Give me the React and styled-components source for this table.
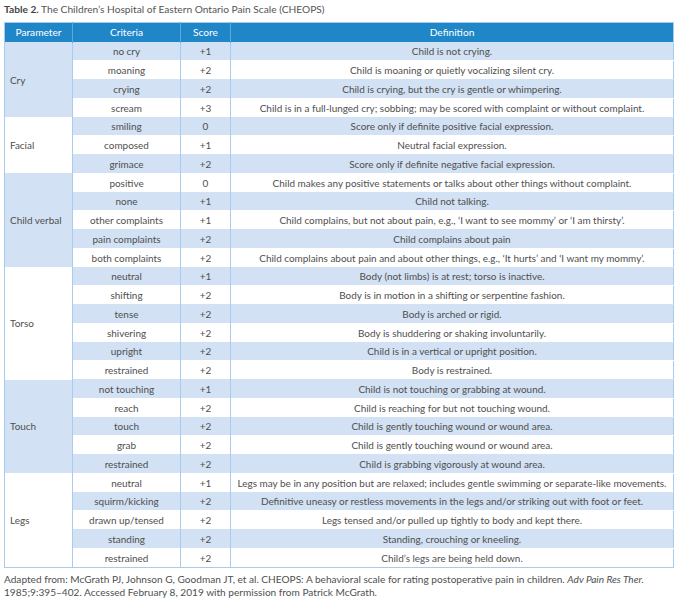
import React from "react";
import styled, { createGlobalStyle } from "styled-components";

const Global = createGlobalStyle`
  html, body { margin: 0; padding: 0; background: #ffffff; }
  body { font-family: Lato, "Open Sans", sans-serif; color: #4f4f4f; }
`;

const Page = styled.div`
  width: 678px;
  padding: 0 5px 0 4px;
  box-sizing: border-box;
`;

const Title = styled.div`
  font-size: 10.2px;
  line-height: 14px;
  padding-top: 2px;
  height: 19.5px;
  color: #555;
  b { font-weight: 700; color: #444; }
`;

const Table = styled.table`
  width: 669px;
  border-collapse: collapse;
  table-layout: fixed;
  border: 1px solid #a9cbed;
  font-size: 9.95px;
`;

const Th = styled.th`
  background: #1f87c8;
  color: #ffffff;
  font-weight: 400;
  font-size: 10.2px;
  height: 19px;
  padding: 0;
  text-align: center;
  border-left: 1px solid #5fa8dc;
  &:first-child { border-left: none; }
`;

const Row = styled.tr`
  height: 18.76px;
  background: ${(p) => (p.$shade ? "#d2e1f3" : "#ffffff")};
`;

const Cell = styled.td`
  padding: 0;
  text-align: center;
  vertical-align: middle;
  white-space: nowrap;
  line-height: 12px;
  border-left: 1px solid #a9cbed;
  border-top: 1px solid ${(p) => (p.$shade ? "#d2e1f3" : "#ffffff")};
`;

const ParamCell = styled.td`
  padding: 0 0 0 5px;
  text-align: left;
  vertical-align: middle;
  background: ${(p) => (p.$shade ? "#d2e1f3" : "#ffffff")};
  border-left: none;
`;

const Foot = styled.div`
  margin-top: 5px;
  font-size: 10.1px;
  line-height: 13px;
  color: #4f4f4f;
  i { font-style: italic; }
`;

const groups = [
  {
    name: "Cry",
    rows: [
      ["no cry", "+1", "Child is not crying."],
      ["moaning", "+2", "Child is moaning or quietly vocalizing silent cry."],
      ["crying", "+2", "Child is crying, but the cry is gentle or whimpering."],
      ["scream", "+3", "Child is in a full-lunged cry; sobbing; may be scored with complaint or without complaint."],
    ],
  },
  {
    name: "Facial",
    rows: [
      ["smiling", "0", "Score only if definite positive facial expression."],
      ["composed", "+1", "Neutral facial expression."],
      ["grimace", "+2", "Score only if definite negative facial expression."],
    ],
  },
  {
    name: "Child verbal",
    rows: [
      ["positive", "0", "Child makes any positive statements or talks about other things without complaint."],
      ["none", "+1", "Child not talking."],
      ["other complaints", "+1", "Child complains, but not about pain, e.g., \u2018I want to see mommy\u2019 or \u2018I am thirsty\u2019."],
      ["pain complaints", "+2", "Child complains about pain"],
      ["both complaints", "+2", "Child complains about pain and about other things, e.g., \u2018It hurts\u2019 and \u2018I want my mommy\u2019."],
    ],
  },
  {
    name: "Torso",
    rows: [
      ["neutral", "+1", "Body (not limbs) is at rest; torso is inactive."],
      ["shifting", "+2", "Body is in motion in a shifting or serpentine fashion."],
      ["tense", "+2", "Body is arched or rigid."],
      ["shivering", "+2", "Body is shuddering or shaking involuntarily."],
      ["upright", "+2", "Child is in a vertical or upright position."],
      ["restrained", "+2", "Body is restrained."],
    ],
  },
  {
    name: "Touch",
    rows: [
      ["not touching", "+1", "Child is not touching or grabbing at wound."],
      ["reach", "+2", "Child is reaching for but not touching wound."],
      ["touch", "+2", "Child is gently touching wound or wound area."],
      ["grab", "+2", "Child is gently touching wound or wound area."],
      ["restrained", "+2", "Child is grabbing vigorously at wound area."],
    ],
  },
  {
    name: "Legs",
    rows: [
      ["neutral", "+1", "Legs may be in any position but are relaxed; includes gentle swimming or separate-like movements."],
      ["squirm/kicking", "+2", "Definitive uneasy or restless movements in the legs and/or striking out with foot or feet."],
      ["drawn up/tensed", "+2", "Legs tensed and/or pulled up tightly to body and kept there."],
      ["standing", "+2", "Standing, crouching or kneeling."],
      ["restrained", "+2", "Child\u2019s legs are being held down."],
    ],
  },
];

export default function App() {
  let idx = 0;
  return (
    <Page>
      <Global />
      <Title>
        <b>Table 2.</b> The Children&rsquo;s Hospital of Eastern Ontario Pain Scale (CHEOPS)
      </Title>
      <Table>
        <colgroup>
          <col style={{ width: 68 }} />
          <col style={{ width: 108 }} />
          <col style={{ width: 50 }} />
          <col style={{ width: 443 }} />
        </colgroup>
        <thead>
          <tr>
            <Th>Parameter</Th>
            <Th>Criteria</Th>
            <Th>Score</Th>
            <Th>Definition</Th>
          </tr>
        </thead>
        <tbody>
          {groups.map((g, gi) =>
            g.rows.map((r, ri) => {
              const shade = idx % 2 === 0;
              idx += 1;
              return (
                <Row key={`${gi}-${ri}`} $shade={shade}>
                  {ri === 0 && (
                    <ParamCell rowSpan={g.rows.length} $shade={gi % 2 === 0}>
                      {g.name}
                    </ParamCell>
                  )}
                  <Cell $shade={shade}>{r[0]}</Cell>
                  <Cell $shade={shade}>{r[1]}</Cell>
                  <Cell $shade={shade}>{r[2]}</Cell>
                </Row>
              );
            })
          )}
        </tbody>
      </Table>
      <Foot>
        Adapted from: McGrath PJ, Johnson G, Goodman JT, et al. CHEOPS: A behavioral scale for rating postoperative pain in children. <i>Adv Pain Res Ther.</i>
        <br />
        1985;9:395&ndash;402. Accessed February 8, 2019 with permission from Patrick McGrath.
      </Foot>
    </Page>
  );
}
